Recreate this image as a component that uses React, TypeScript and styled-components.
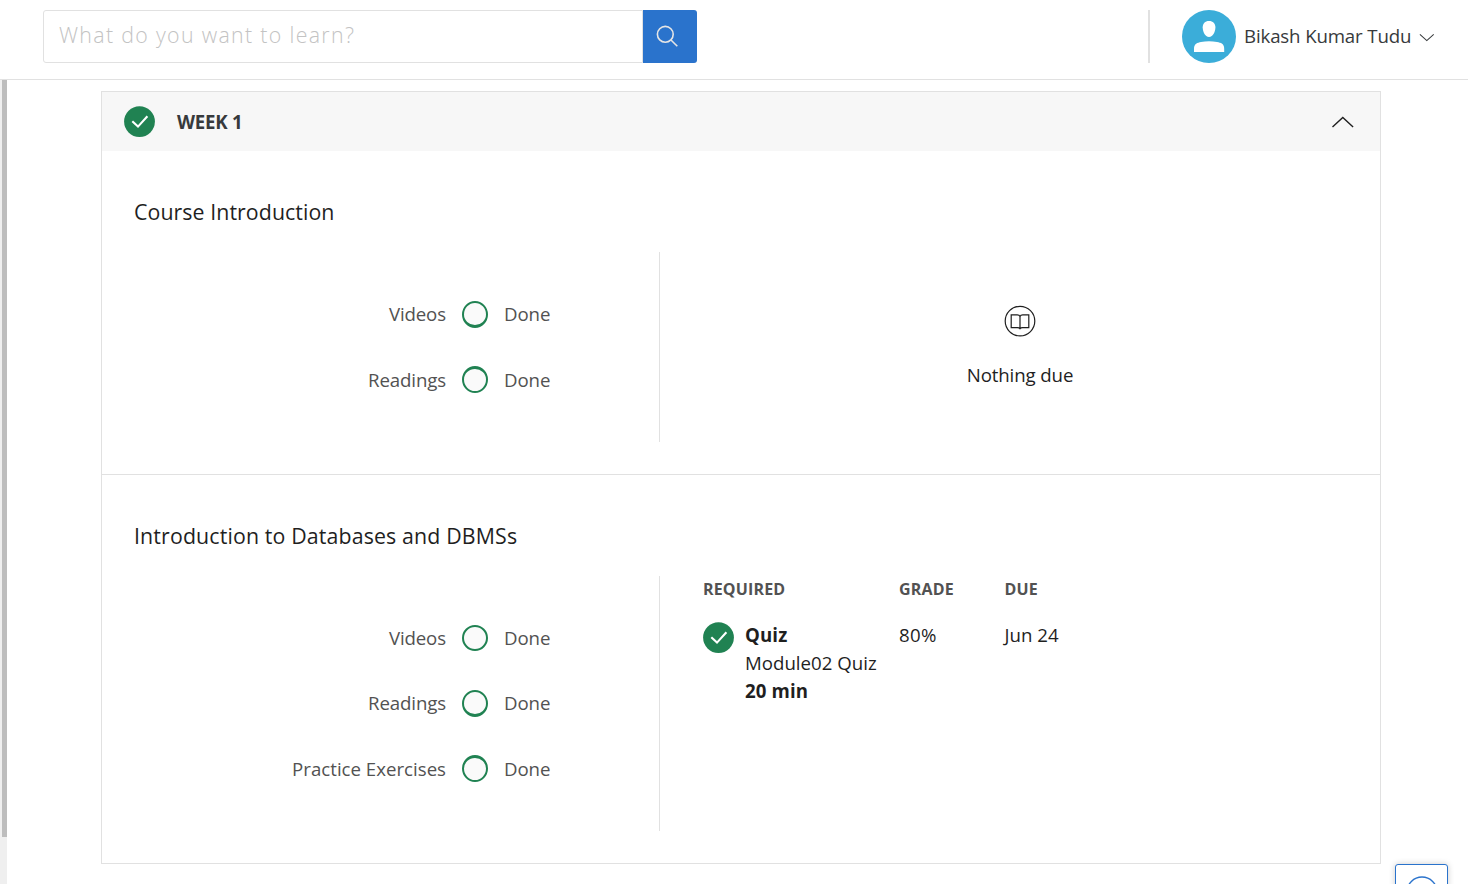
import React from "react";
import styled, { createGlobalStyle } from "styled-components";

const GlobalStyle = createGlobalStyle`
  *, *::before, *::after { box-sizing: border-box; }
  html, body { margin: 0; padding: 0; height: 100%; overflow: hidden; background: #fff; }
  body { font-family: "Open Sans", "Noto Sans", sans-serif; font-size: 18.67px; line-height: 28px; color: #1f1f1f; }
  #root { height: 100%; }
  svg { display: block; flex: none; }
`;

const Page = styled.div`
  display: flex;
  flex-direction: column;
  height: 884px;
  overflow: hidden;
`;

const TopBar = styled.header`
  display: flex;
  flex: none;
  justify-content: space-between;
  height: 80px;
  padding: 10px 33px 16px 43px;
  border-bottom: 1px solid #e1e1e1;
`;

const SearchForm = styled.form`
  display: flex;
  height: 53px;
`;

const SearchInput = styled.input`
  width: 600px;
  height: 53px;
  padding: 0 15px 5px;
  border: 1px solid #e1e1e1;
  border-radius: 3px 0 0 3px;
  outline: none;
  background: #fff;
  font-family: "Open Sans", "Noto Sans", sans-serif;
  font-size: 21.33px;
  font-weight: 300;
  letter-spacing: 1.33px;
  &::placeholder { color: #c3c3c3; opacity: 1; }
`;

const SearchButton = styled.button`
  display: flex;
  width: 54px;
  height: 53px;
  padding: 15px 0 0 13px;
  border: 0;
  border-radius: 0 3px 3px 0;
  background: #2a73cc;
`;

const Account = styled.div`
  display: flex;
  align-items: center;
  height: 53px;
  padding-left: 32px;
  border-left: 2px solid #e1e1e1;
`;

const UserName = styled.span`
  width: 168px;
  margin: 0 7px 1px 8px;
  color: #373a3c;
  letter-spacing: -0.14px;
  white-space: nowrap;
`;

const Body = styled.div`
  display: flex;
  flex: 1;
  min-height: 0;
`;

const ScrollTrack = styled.div`
  flex: none;
  width: 7px;
  padding-left: 2px;
  background: #efefef;
`;

const ScrollThumb = styled.div`
  height: 757px;
  background: #bdbdbd;
`;

const Content = styled.main`
  flex: none;
  width: 1374px;
  padding: 11px 0 0 94px;
`;

const Card = styled.article`
  width: 1280px;
  border: 1px solid #e1e1e1;
`;

const WeekHeader = styled.div`
  display: flex;
  align-items: center;
  height: 59px;
  padding: 0 26px 0 22px;
  background: #f7f7f7;
`;

const WeekTitle = styled.h2`
  flex: 1;
  margin: 0 0 0 22px;
  color: #373a3c;
  font-size: 18.67px;
  font-weight: 700;
  letter-spacing: -0.25px;
  line-height: 28px;
`;

const Module = styled.section<{ $height: number }>`
  height: ${(p) => p.$height}px;
  padding: 45px 32px 32px;
  & + & { border-top: 1px solid #e1e1e1; }
`;

const ModuleTitle = styled.h3<{ $spacing: number }>`
  height: 56px;
  margin: 0;
  font-size: 21.33px;
  font-weight: 400;
  letter-spacing: ${(p) => p.$spacing}px;
  line-height: 32px;
`;

const Columns = styled.div<{ $height: number }>`
  display: flex;
  height: ${(p) => p.$height}px;
`;

const ProgressList = styled.ul`
  width: 526px;
  margin: 0;
  padding: 29.5px 0 0;
  border-right: 1px solid #e1e1e1;
  list-style: none;
  color: #525252;
`;

const ProgressItem = styled.li<{ $height: number }>`
  display: grid;
  grid-template-columns: 312px 26px 1fr;
  column-gap: 16px;
  align-items: center;
  height: ${(p) => p.$height}px;
`;

const ItemLabel = styled.span<{ $spacing: number }>`
  letter-spacing: ${(p) => p.$spacing}px;
  text-align: right;
`;

const ItemStatus = styled.span`
  letter-spacing: -0.1px;
`;

const Ring = styled.span<{ $heavy: "top" | "bottom" | "none" }>`
  width: 26px;
  height: ${(p) => (p.$heavy === "none" ? 26 : 27)}px;
  border: 2px solid #208252;
  border-top-width: ${(p) => (p.$heavy === "top" ? 3 : 2)}px;
  border-bottom-width: ${(p) => (p.$heavy === "bottom" ? 3 : 2)}px;
  border-radius: 50%;
  background: #fafafa;
`;

const NothingDue = styled.div`
  display: flex;
  flex: 1;
  flex-direction: column;
  align-items: center;
  gap: 24px;
  padding: 53px 0 0 32px;
  letter-spacing: -0.12px;
`;

const Assignments = styled.div`
  display: grid;
  grid-template-columns: 196px 105.5px 1fr;
  grid-template-rows: 45px 84px;
  flex: 1;
  padding-left: 43px;
`;

const ColumnTitle = styled.div`
  color: #525252;
  font-size: 16px;
  font-weight: 700;
  letter-spacing: 0.16px;
  line-height: 26px;
`;

const Quiz = styled.div`
  display: flex;
  gap: 11px;
  > svg { margin-top: 1px; }
`;

const QuizText = styled.div`
  display: flex;
  flex-direction: column;
  white-space: nowrap;
`;

const Strong = styled.strong`
  font-weight: 700;
  letter-spacing: 0.12px;
`;

const Grade = styled.div`
  letter-spacing: 0.3px;
`;

const HelpButton = styled.button`
  position: absolute;
  left: 1395px;
  top: 864px;
  display: flex;
  justify-content: center;
  width: 53px;
  height: 53px;
  padding: 11px 0 0;
  border: 1px solid #2a73cc;
  border-radius: 3px;
  background: #fff;
  box-shadow: 0 0 6px rgba(0, 0, 0, 0.2);
`;

const Viewport = styled.div`
  position: relative;
  height: 884px;
  overflow: hidden;
`;

const CheckIcon = () => (
  <svg width="31" height="31" viewBox="0 0 31 31" fill="none">
    <circle cx="15.5" cy="15.6" r="15.4" fill="#208252" />
    <path d="M8.3 15.2L14 20.6L23.4 10.2" stroke="#fff" strokeWidth="2.1" />
  </svg>
);

const SearchIcon = () => (
  <svg width="24" height="24" viewBox="0 0 24 24" fill="none" stroke="#e5e5e5" strokeWidth="1.6">
    <circle cx="9.3" cy="9.3" r="7.9" />
    <path d="M15 15L21.3 21.3" />
  </svg>
);

const Avatar = () => (
  <svg width="54" height="53" viewBox="0 0 54 53">
    <ellipse cx="27" cy="26.5" rx="27" ry="26.5" fill="#3badd9" />
    <path d="M27 11C31 11 33.4 13.7 33.4 17.3C33.4 21.7 31 27 27 27C23 27 20.7 21.7 20.7 17.3C20.7 13.7 23 11 27 11Z" fill="#fff" />
    <path d="M12 41.9V38.7C12 33.7 15.5 32.7 19 32C24 30.9 30 30.9 35 32C39 32.7 42.2 33.7 42.2 38.7V41.9Z" fill="#fff" />
  </svg>
);

const BookIcon = () => (
  <svg width="32" height="32" viewBox="0 0 32 32" fill="none" stroke="#1f1f1f" strokeWidth="1.2">
    <circle cx="16" cy="16.1" r="14.8" />
    <path d="M16 11.4C15.5 10.2 14.5 9.9 13.3 9.9H7.2V22.6H13.5C14.8 22.6 15.5 22.9 16 23.7C16.5 22.9 17.2 22.6 18.5 22.6H24.8V9.9H18.7C17.5 9.9 16.5 10.2 16 11.4ZM16 11.4V23.9" />
  </svg>
);

type Heavy = "top" | "bottom" | "none";

interface ProgressProps {
  rowHeight: number;
  items: { label: string; heavy: Heavy; spacing?: number }[];
}

const Progress = ({ rowHeight, items }: ProgressProps) => (
  <ProgressList>
    {items.map(({ label, heavy, spacing = -0.12 }) => (
      <ProgressItem key={label} $height={rowHeight}>
        <ItemLabel $spacing={spacing}>{label}</ItemLabel>
        <Ring $heavy={heavy} />
        <ItemStatus>Done</ItemStatus>
      </ProgressItem>
    ))}
  </ProgressList>
);

export default function App() {
  return (
    <Viewport>
      <GlobalStyle />
      <Page>
        <TopBar>
          <SearchForm>
            <SearchInput placeholder="What do you want to learn?" />
            <SearchButton type="button" aria-label="Search">
              <SearchIcon />
            </SearchButton>
          </SearchForm>
          <Account>
            <Avatar />
            <UserName>Bikash Kumar Tudu</UserName>
            <svg width="16" height="10" viewBox="0 0 16 10" fill="none" stroke="#373a3c" strokeWidth="1.05">
              <path d="M0.9 2.4L7.8 8.6L14.7 2.4" />
            </svg>
          </Account>
        </TopBar>
        <Body>
          <ScrollTrack>
            <ScrollThumb />
          </ScrollTrack>
          <Content>
            <Card>
              <WeekHeader>
                <CheckIcon />
                <WeekTitle>WEEK 1</WeekTitle>
                <svg width="22" height="12" viewBox="0 0 22 12" fill="none" stroke="#1f1f1f" strokeWidth="1.4">
                  <path d="M0.5 11L10.8 1.5L21.1 11" />
                </svg>
              </WeekHeader>
              <Module $height={323}>
                <ModuleTitle $spacing={0.07}>Course Introduction</ModuleTitle>
                <Columns $height={190}>
                  <Progress
                    rowHeight={65.5}
                    items={[
                      { label: "Videos", heavy: "bottom" },
                      { label: "Readings", heavy: "top" },
                    ]}
                  />
                  <NothingDue>
                    <BookIcon />
                    <span>Nothing due</span>
                  </NothingDue>
                </Columns>
              </Module>
              <Module $height={389}>
                <ModuleTitle $spacing={0.14}>Introduction to Databases and DBMSs</ModuleTitle>
                <Columns $height={255}>
                  <Progress
                    rowHeight={65.33}
                    items={[
                      { label: "Videos", heavy: "none" },
                      { label: "Readings", heavy: "bottom" },
                      { label: "Practice Exercises", heavy: "top", spacing: 0 },
                    ]}
                  />
                  <Assignments>
                    <ColumnTitle>REQUIRED</ColumnTitle>
                    <ColumnTitle>GRADE</ColumnTitle>
                    <ColumnTitle>DUE</ColumnTitle>
                    <Quiz>
                      <CheckIcon />
                      <QuizText>
                        <Strong>Quiz</Strong>
                        <span>Module02 Quiz</span>
                        <Strong>20 min</Strong>
                      </QuizText>
                    </Quiz>
                    <Grade>80%</Grade>
                    <div>Jun 24</div>
                  </Assignments>
                </Columns>
              </Module>
            </Card>
          </Content>
        </Body>
      </Page>
      <HelpButton aria-label="Help">
        <svg width="32" height="32" viewBox="0 0 32 32" fill="none" stroke="#2a73cc" strokeWidth="1.4">
          <circle cx="16" cy="16" r="15" />
        </svg>
      </HelpButton>
    </Viewport>
  );
}
